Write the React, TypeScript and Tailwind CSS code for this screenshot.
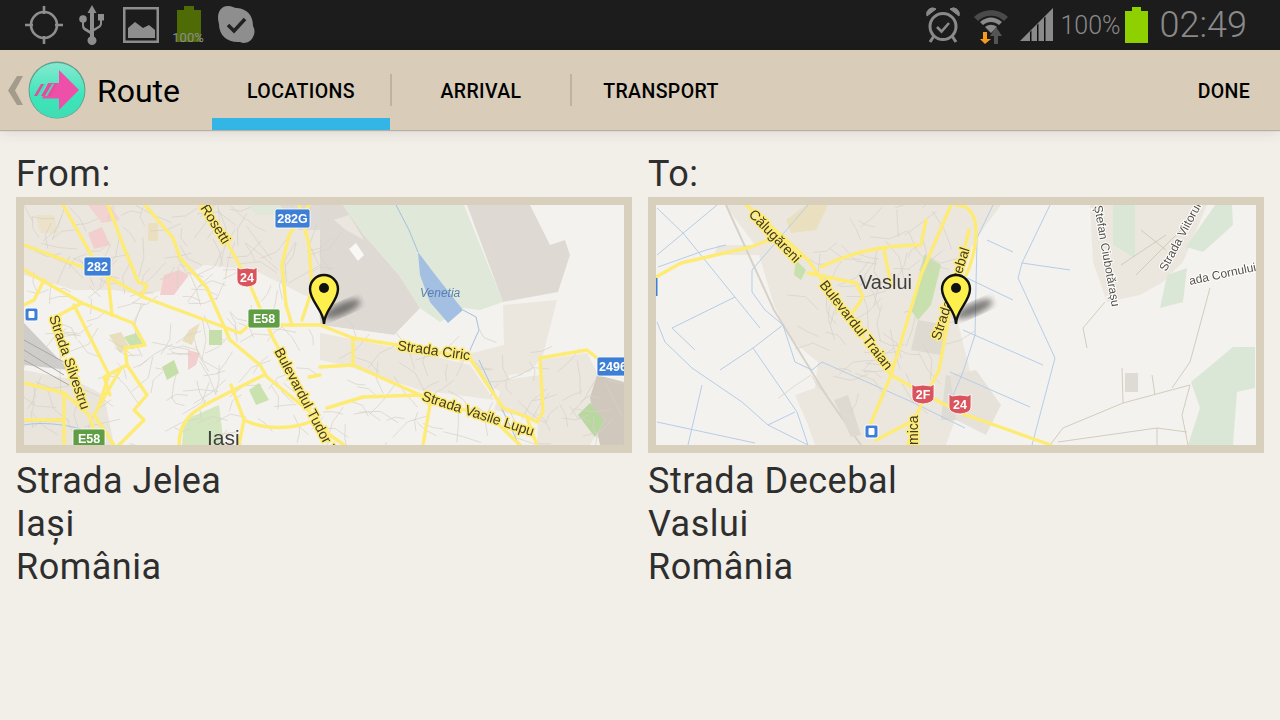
const MAP_FONT = "'Liberation Sans', Arial, sans-serif";

function Road({ d, w = 3.4 }: { d: string; w?: number }) {
  return <path d={d} fill="none" stroke="#fdeb74" strokeWidth={w} strokeLinejoin="round" strokeLinecap="round" />;
}

// thin street texture, same every run
function streets(count: number, x: number, y: number, w: number, h: number, seed: number) {
  let s = seed;
  const next = () => {
    s = (s * 1103515245 + 12345) % 2147483648;
    return s / 2147483648;
  };
  let d = "";
  for (let i = 0; i < count; i++) {
    const x0 = x + next() * w;
    const y0 = y + next() * h;
    const a = next() * 6.28;
    const b = a + (next() - 0.5) * 1.6;
    const l = 8 + next() * 14;
    const x1 = x0 + Math.cos(a) * l;
    const y1 = y0 + Math.sin(a) * l;
    d += `M${x0.toFixed(1)} ${y0.toFixed(1)}L${x1.toFixed(1)} ${y1.toFixed(1)} ${(x1 + Math.cos(b) * l).toFixed(1)} ${(y1 + Math.sin(b) * l).toFixed(1)}`;
  }
  return d;
}

function Label({ x, y, r, children, size = 14, halo = "#fdeb74" }: { x: number; y: number; r: number; children: string; size?: number; halo?: string }) {
  return (
    <text
      x={0}
      y={0}
      transform={`translate(${x} ${y}) rotate(${r})`}
      fontFamily={MAP_FONT}
      fontSize={size}
      fill="#3f3a2a"
      stroke={halo}
      strokeWidth={3}
      paintOrder="stroke"
    >
      {children}
    </text>
  );
}

function Shield({ x, y, w, label, color, red = false }: { x: number; y: number; w: number; label: string; color: string; red?: boolean }) {
  return (
    <g>
      {red ? (
        <path
          d={`M${x} ${y + 1}L${x + 3} ${y + 3}L${x + w / 2} ${y + 2}L${x + w - 3} ${y + 3}L${x + w} ${y + 1}V${y + 14}Q${x + w} ${y + 20} ${x + w / 2} ${y + 21}Q${x} ${y + 20} ${x} ${y + 14}Z`}
          fill={color}
          stroke="#ffffff"
          strokeWidth={0.8}
        />
      ) : (
        <rect x={x} y={y} width={w} height={19} rx={2} fill={color} stroke="#ffffff" strokeWidth={0.8} />
      )}
      <text x={x + w / 2} y={y + (red ? 16 : 14)} textAnchor="middle" fontFamily={MAP_FONT} fontWeight={700} fontSize={12.5} fill="#ffffff">
        {label}
      </text>
    </g>
  );
}

function Bus({ x, y }: { x: number; y: number }) {
  return (
    <g>
      <rect x={x} y={y} width={13} height={13} rx={2} fill="#3d7fd6" stroke="#ffffff" />
      <rect x={x + 3.5} y={y + 3} width={6} height={7} rx={1} fill="#ffffff" />
    </g>
  );
}

function Pin({ x, y }: { x: number; y: number }) {
  return (
    <g transform={`translate(${x} ${y})`}>
      <ellipse cx={18} cy={35} rx={20} ry={6} transform="rotate(-24 18 35)" fill="#3a3a3a" opacity={0.65} filter="url(#soft)" />
      <path d="M0 50 C0 36 -14 28 -14 15 A14 14 0 0 1 14 15 C14 28 0 36 0 50 Z" fill="#fdf04c" stroke="#111111" strokeWidth={2.4} />
      <circle cx={0} cy={14} r={5} fill="#111111" />
    </g>
  );
}

function MapFrom() {
  return (
    <svg viewBox="0 0 600 240" className="block h-[240px] w-[600px] blur-[0.4px]">
      <defs>
        <filter id="soft">
          <feGaussianBlur stdDeviation="3" />
        </filter>
      </defs>
      <rect width="600" height="240" fill="#f4f2ee" />
      {/* land areas */}
      <path d="M0 0H300V100L270 85 230 65 180 60 140 85 120 90 90 85 50 85 0 70Z" fill="#ebe7df" />
      <path d="M0 165L50 175 80 190 90 240H0Z" fill="#e9e5dd" />
      <path d="M0 118L45 165 0 160Z" fill="#cfcdca" />
      <path d="M12 10H30L34 28 16 28Z" fill="#ebe2c9" />
      <path d="M64 0H86L96 15 78 18Z" fill="#f1d4d0" />
      <path d="M64 28L78 22 86 40 70 44Z" fill="#f2cfce" />
      <path d="M124 18H134V36H124Z" fill="#eadfbf" />
      <path d="M140 70L155 65 165 70 150 90 136 90Z" fill="#f2cfce" />
      <path d="M165 125L176 118 168 140 158 136Z" fill="#e9dfbf" />
      <path d="M164 145L176 148 172 160 164 165Z" fill="#f2cfce" />
      <path d="M185 125H198V140H185Z" fill="#c4dfa8" />
      <path d="M138 162L150 155 155 168 143 175Z" fill="#c4dfa8" />
      <path d="M85 130L97 127 106 143 96 148Z" fill="#e9dfbf" />
      <path d="M100 132L112 128 120 140 108 144Z" fill="#c9e2ae" />
      <path d="M225 0H258V10H232Z" fill="#dfe8d9" />
      <path d="M256 0H300V25H275Z" fill="#dedad5" />
      <path d="M225 185L235 178 245 195 232 200Z" fill="#c9e2ae" />
      <path d="M160 215L195 200 200 240H158Z" fill="#d5e7c0" />
      <path d="M296 0H319L340 30 375 70 396 103 370 130 296 120Z" fill="#ded9d3" />
      <path d="M319 0H440L479 97 456 105 440 103 416 117 396 103 375 70 340 30Z" fill="#dfe8d9" />
      <path d="M443 0H506L526 40 541 35 546 50 534 87 479 97Z" fill="#ded9d3" />
      <path d="M479 100L533 95 519 150 506 167 485 170 480 190 460 175 440 150 480 140Z" fill="#ebe7df" />
      <path d="M296 120L370 130 420 150 446 165 470 205 500 240H300Z" fill="#f4f2ee" />
      <path d="M296 128L373 143 446 160 470 195 396 185 320 160 296 155Z" fill="#ebe7df" />
      <path d="M516 155L563 148 590 200 566 240H513Z" fill="#ebe7df" />
      <path d="M480 175L516 170 513 215 470 205Z" fill="#ebe7df" />
      <path d="M573 170L600 177V240H576L566 193Z" fill="#d0c8bc" />
      <path d="M566 198L581 217 571 232 554 210Z" fill="#b8d8a0" />
      <path d="M310 15L325 10 340 35 322 25Z" fill="#ebe7df" />
      <path d="M332 38L340 50 334 56 325 44Z" fill="#f8f8f6" />
      <path d="M394 47L409 67 439 105 424 118 406 97 396 70Z" fill="#a3bfe2" />
      <path d="M394 47L385 25 372 0M439 105L452 112 455 125 446 145M455 155L495 240" fill="none" stroke="#a3bfe2" strokeWidth={1} />
      {/* minor streets */}
      <path d={streets(190, 0, 0, 300, 240, 7)} fill="none" stroke="#d6d1c7" strokeWidth={0.7} />
      <path d={streets(70, 300, 135, 300, 105, 23)} fill="none" stroke="#d6d1c7" strokeWidth={0.7} />
      <path d="M0 145L40 170M0 135L45 160M0 155L45 180" fill="none" stroke="#a9a7a4" strokeWidth={1} />
      <path d="M0 216H40M0 220C20 216 60 220 80 235" fill="none" stroke="#a9c4e6" strokeWidth={1} />
      {/* main roads */}
      <Road d="M0 40L53 60 86 73 119 92 216 128 235 112 240 120H296L329 133 373 140 446 153 479 203 503 212 513 217 519 207 516 153 563 145 573 153" />
      <Road d="M39 0L69 53M84 0L99 40 114 77 123 80 118 90" />
      <Road d="M121 0L149 33 156 53 183 83 206 135 236 160 243 172 286 207 306 230 320 240" />
      <Road d="M176 0L203 37 226 80 249 133 286 203" />
      <Road d="M0 65L58 98 109 118 121 140 101 143 103 160 123 190 110 205 120 215 95 240M58 98L35 110M20 75L10 95 0 100" />
      <Road d="M84 72L88 110M96 165L70 210 90 240M103 160L80 172 86 190M50 100L85 170 75 200" />
      <Road d="M0 178L40 188 65 210 75 240M40 190V240M0 215H40" />
      <Road d="M155 240C155 215 170 205 190 195L240 170M207 180L220 215 215 240M220 215C240 225 270 225 290 215" />
      <Road d="M285 0L265 30 258 60 262 100 268 120M275 0L285 40 288 85 278 115" />
      <Road d="M296 162L329 160 396 190 406 200 399 240M329 133V160M303 203L339 192 396 190 470 215 496 240M503 213L513 240M285 172L296 170" />
      {/* labels */}
      <Label x={176} y={3} r={58}>Rosetti</Label>
      <Label x={25} y={112} r={71}>Strada Silvestru</Label>
      <Label x={250} y={146} r={62}>Bulevardul Tudor V</Label>
      <Label x={373} y={145} r={8}>Strada Ciric</Label>
      <Label x={397} y={195} r={18}>Strada Vasile Lupu</Label>
      <text x={396} y={92} fontFamily={MAP_FONT} fontSize={12} fontStyle="italic" fill="#5b7fb0">Venetia</text>
      <text x={183} y={240} fontFamily={MAP_FONT} fontSize={21} fill="#3f3f3f">Iasi</text>
      {/* shields */}
      <Shield x={251} y={4} w={35} label="282G" color="#3d7fd6" />
      <Shield x={60} y={52} w={27} label="282" color="#3d7fd6" />
      <Shield x={213} y={61} w={20} label="24" color="#d9545c" red />
      <Shield x={224} y={104} w={32} label="E58" color="#5f9e45" />
      <Shield x={49} y={224} w={32} label="E58" color="#5f9e45" />
      <Shield x={573} y={152} w={32} label="2496" color="#3d7fd6" />
      <Bus x={1} y={103} />
      <Pin x={300} y={69} />
    </svg>
  );
}

function MapTo() {
  return (
    <svg viewBox="0 0 600 240" className="block h-[240px] w-[600px] blur-[0.4px]">
      <rect width="600" height="240" fill="#f4f2ee" />
      {/* land areas */}
      <path d="M69 0L99 40 62 40 58 50 103 50 118 100 135 135 162 157 159 183 139 190 152 220 159 240H290L315 170 300 110 320 0Z" fill="#ebe7df" />
      <path d="M70 0L118 105 170 190 205 240" fill="none" stroke="#d6d2c8" strokeWidth={2} />
      <path d="M150 0H172L160 25 135 28 130 15Z" fill="#eadfbf" />
      <path d="M268 50L285 60 275 100 262 115 255 105Z" fill="#c8e0ad" />
      <path d="M262 115L290 120 285 150 255 145Z" fill="#dedad2" />
      <path d="M140 55L150 65 145 75 138 70Z" fill="#c8e0ad" />
      <path d="M290 170L320 180 310 215 285 215Z" fill="#dedad4" />
      <path d="M178 195L192 190 205 230 195 232Z" fill="#dedad2" />
      <path d="M300 0H345L330 20 310 50Z" fill="#ebe7df" />
      <path d="M294 170L320 165 345 200 330 230 300 215Z" fill="#e6e2da" />
      <path d="M434 0H551L527 57 507 77 484 90 451 97 437 57Z" fill="#ebe7df" />
      <path d="M457 0H479V53L457 40Z" fill="#dbe7d6" />
      <path d="M559 0H576L577 20 547 47 530 42Z" fill="#dbe7d6" />
      <path d="M511 70L531 63 527 97 504 103Z" fill="#dbe7d6" />
      <path d="M535 177L577 142H599V183L581 187 577 240H532L544 203Z" fill="#dbe7d6" />
      <path d="M469 168H482V187H469Z" fill="#dedad4" />
      {/* water lines */}
      <path
        d="M1 50L61 0M1 3L27 28 104 123M16 123L79 92M16 123L39 145M1 117L9 137 36 163 86 197 112 220 152 240M64 165L97 143 127 120M97 143L141 207 152 240M46 180L32 240M1 217L99 238M112 220L139 207M96 65L152 0M96 65V87L109 105 127 120 139 157 156 165 166 157 256 197 309 223M2 62L50 45 70 40M394 0L366 58 362 73 399 153 376 240M366 58L414 65M331 35L357 47M311 73L357 95M307 125L387 160M294 167L374 202M337 0L321 33 319 130 307 167 295 195"
        fill="none"
        stroke="#b4cde9"
        strokeWidth={1}
      />
      {/* minor streets */}
      <path d={streets(70, 150, 0, 140, 190, 11)} fill="none" stroke="#d6d1c7" strokeWidth={0.7} />
      <path d="M449 97L427 123 431 143M554 83L534 157 516 183M534 180L467 198 407 223 394 240M402 237L501 223 531 227M534 180L526 210 532 240M501 223V240M466 163L467 198M496 170L499 190M465 60L510 30M480 70L525 25M485 25L510 45" fill="none" stroke="#cfc7b8" strokeWidth={0.9} />
      {/* main roads */}
      <Road d="M0 72L25 58 95 42 125 30" />
      <Road d="M90 0L125 30 152 55 175 88 235 170 270 190M152 68L200 78 207 92 195 110" />
      <Road d="M165 62C190 50 220 40 265 40L270 15M228 45L235 80" />
      <Road d="M295 0L265 70 235 170 210 230" />
      <Road d="M313 25L295 100 283 165 270 190 258 215 220 235M300 0C330 0 320 50 310 70" />
      <Road d="M258 215L252 240M270 190L310 210 395 240" />
      {/* labels */}
      <Label x={92} y={10} r={46}>Călugăreni</Label>
      <Label x={163} y={80} r={52}>Bulevardul Traian</Label>
      <Label x={284} y={136} r={-72}>Strada Decebal</Label>
      <Label x={262} y={240} r={-90}>mica</Label>
      <text x={203} y={84} fontFamily={MAP_FONT} fontSize={20} fill="#3f3f3f">Vaslui</text>
      <g fontFamily={MAP_FONT} fontSize={12} fill="#555049" stroke="#ffffff" strokeWidth={2} paintOrder="stroke">
        <text transform="translate(438 1) rotate(80)">Ștefan Ciubotărașu</text>
        <text transform="translate(510 67) rotate(-62)">Strada Viitorului</text>
        <text transform="translate(534 80) rotate(-12)">ada Cornului</text>
      </g>
      {/* shields */}
      <Shield x={256} y={178} w={22} label="2F" color="#d9545c" red />
      <Shield x={293} y={188} w={22} label="24" color="#d9545c" red />
      <rect x={0} y={73} width={1.5} height={18} fill="#3d7fd6" />
      <Bus x={209} y={220} />
      <Pin x={300} y={69} />
    </svg>
  );
}

function AppIcon() {
  return (
    <svg viewBox="0 0 58 60" className="h-[60px] w-[58px] shrink-0">
      <defs>
        <linearGradient id="disc" x1="0" y1="0" x2="0" y2="1">
          <stop offset="0" stopColor="#86e8cf" />
          <stop offset="0.6" stopColor="#3ce6ba" />
          <stop offset="1" stopColor="#41dcb4" />
        </linearGradient>
      </defs>
      <circle cx="29" cy="30" r="28.5" fill="#5f9f8c" />
      <circle cx="29" cy="30.5" r="27.5" fill="url(#disc)" />
      <path d="M31 10L51 30 31 50V38.5H14L20 23H31Z" fill="#ee4fa8" />
      <path d="M6 36L13 24H17L10 36ZM13 36L20 24H24L17 36ZM20 36L27 24H29L23 36Z" fill="#e84a9e" />
      <path d="M9 36L16 24H18L11 36ZM17 36L24 24H26L19 36Z" fill="#42dfb6" />
    </svg>
  );
}

function StatusLeft() {
  return (
    <div className="flex items-center text-[#8e8e8e]">
      <svg viewBox="0 0 38 38" className="ml-[25px] h-[38px] w-[38px]" fill="none" stroke="currentColor" strokeWidth={2.6}>
        <circle cx="19" cy="19" r="13" />
        <path d="M19 0V8M19 30V38M0 19H8M30 19H38" />
      </svg>
      <svg viewBox="0 0 26 40" className="ml-[16px] h-[40px] w-[26px]" fill="currentColor">
        <path d="M13 0L17.5 8H15V31.5A4.5 4.5 0 1 1 11 31.5V8H8.5Z" />
        <circle cx="4" cy="14" r="3.8" />
        <rect x="19" y="9" width="6" height="6.5" />
        <path d="M3 16H5V20C5 22 6 22.5 8 23.8L13 27V30L7 26.5C4 24.8 3 23.5 3 20.5ZM21 15H23V18C23 21 22 22 19.5 23.5L13 27.5V24.7L18 21.7C20 20.5 21 20 21 18Z" />
      </svg>
      <svg viewBox="0 0 36 36" className="ml-[18px] h-[36px] w-[36px]" fill="currentColor">
        <path d="M0 0H36V36H0ZM2.500 2.500V33.500H33.500V2.500Z" fillRule="evenodd" />
        <path d="M5 31V21L12 15 20 21 26 18 32 23V31Z" />
      </svg>
      <div className="relative ml-[17px] h-[38px] w-[26px]">
        <svg viewBox="0 0 24 36" className="ml-px h-[36px] w-[24px]" fill="#4f6b05">
          <path d="M7 0H17V4H24V36H0V4H7Z" />
        </svg>
        <span className="absolute top-[25px] left-[-5px] w-[34px] text-center font-['Roboto'] text-[13px] leading-[14px] text-[#8e8e8e]">100%</span>
      </div>
      <svg viewBox="0 0 38 38" className="ml-[15px] h-[38px] w-[38px]">
        <path d="M11 0C15 0 17 2 20 2C30 3 36 9 36 20C38 24 38 27 36 31C33 37 27 38 23 36C11 37 2 30 2 18C-1 8 3 0 11 0Z" fill="currentColor" />
        <path d="M11 19L17 25 28 13" fill="none" stroke="#222222" strokeWidth={3.5} />
      </svg>
    </div>
  );
}

function StatusRight() {
  return (
    <div className="flex items-center text-[#8a8a8a]">
      <svg viewBox="0 0 34 36" className="h-[36px] w-[34px]" fill="none" stroke="currentColor">
        <circle cx="17" cy="19.500" r="13" strokeWidth={3} />
        <path d="M11 20L15.500 24.500 23 16" strokeWidth={2.600} />
        <path d="M1 9A6 6 0 0 1 10 2ZM33 9A6 6 0 0 0 24 2Z" fill="currentColor" strokeWidth={1} />
        <path d="M8 29L4 35M26 29L30 35" strokeWidth={3} />
      </svg>
      <svg viewBox="0 0 34 38" className="ml-[14px] h-[38px] w-[34px]">
        <path d="M0 11C9 2 25 2 34 11L30 15C23 8 11 8 4 15Z" fill="#4a4a4a" />
        <path d="M6 16C13 10 21 10 28 16L25 19C20 15 14 15 9 19Z" fill="#8a8a8a" />
        <path d="M11 21C15 18 19 18 23 21L17 27Z" fill="#8a8a8a" />
        <path d="M20 38V30H16L22 21 28 30H24V38Z" fill="#555555" />
        <path d="M9 26H13V33H17L11 38 6 33H9Z" fill="#f39c1f" />
      </svg>
      <svg viewBox="0 0 34 34" className="ml-[12px] h-[34px] w-[34px]">
        <path d="M0 33L33 0V33Z" fill="currentColor" />
        <path d="M10 33V24L11.500 22.500V33ZM17 33V17L18.500 15.500V33ZM24 33V10L25.500 8.500V33Z" fill="#111111" />
      </svg>
      <span className="ml-[6px] font-['Roboto'] text-[25px] leading-none font-light">100%</span>
      <svg viewBox="0 0 24 36" className="ml-[4px] h-[36px] w-[24px]" fill="#8fd100">
        <path d="M7 0H16V4H23V36H0V4H7Z" />
      </svg>
      <span className="mr-[33px] ml-[11px] font-['Roboto'] text-[36px] leading-none font-light">02:49</span>
    </div>
  );
}

function Tab({ label, active, divider }: { label: string; active?: boolean; divider?: boolean }) {
  return (
    <div className="flex items-stretch">
      <div className={`flex w-[178px] items-center justify-center border-b-[12px] pt-[16px] font-['Roboto'] text-[19.500px] font-medium tracking-[0.4px] text-black ${active ? "border-[#33b5e5]" : "border-transparent"}`}>
        {label}
      </div>
      {divider && <div className="my-[24px] w-[2px] bg-[#bdb3a2]" />}
    </div>
  );
}

function Place({ title, lines, children }: { title: string; lines: string[]; children: React.ReactNode }) {
  return (
    <div>
      <div className="pt-px text-[36px] leading-[43px] tracking-[0.5px]">{title}</div>
      <div className="mt-px border-8 border-[#d9cfbd]">{children}</div>
      <div className="mt-[7px]">
        {lines.map((line) => (
          <div key={line} className="text-[36px] leading-[43px] tracking-[0.5px]">{line}</div>
        ))}
      </div>
    </div>
  );
}

export default function App() {
  return (
    <div className="flex h-[720px] w-[1280px] flex-col overflow-hidden bg-[#f2efe8] font-['Roboto',sans-serif]">
      {/* status bar */}
      <div className="flex h-[50px] shrink-0 items-center justify-between bg-[#1c1c1c]">
        <StatusLeft />
        <StatusRight />
      </div>

      {/* action bar */}
      <div className="flex h-[80px] shrink-0 items-stretch bg-[#d9cdba] shadow-[0_1px_1px_#b5b0a6,0_2px_14px_rgba(0,0,0,0.1)]">
        <div className="flex w-[212px] items-center">
          <svg viewBox="0 0 15 29" className="ml-[8px] h-[29px] w-[15px]" fill="#a39b8c">
            <path d="M9 0H15L7 14.500 15 29H9L0 14.500Z" />
          </svg>
          <div className="ml-[5px]"><AppIcon /></div>
          <span className="mt-px ml-[11px] text-[32px] text-black">Route</span>
        </div>
        <Tab label="LOCATIONS" active divider />
        <Tab label="ARRIVAL" divider />
        <Tab label="TRANSPORT" />
        <div className="ml-auto flex items-center pt-[4px] pr-[30px] font-['Roboto'] text-[19.500px] font-medium tracking-[0.3px] text-black">DONE</div>
      </div>

      {/* locations */}
      <div className="grid grid-cols-2 gap-4 px-4 pt-[22px] text-[#2e2e2e]">
        <Place title="From:" lines={["Strada Jelea", "Iași", "România"]}>
          <MapFrom />
        </Place>
        <Place title="To:" lines={["Strada Decebal", "Vaslui", "România"]}>
          <MapTo />
        </Place>
      </div>
    </div>
  );
}
